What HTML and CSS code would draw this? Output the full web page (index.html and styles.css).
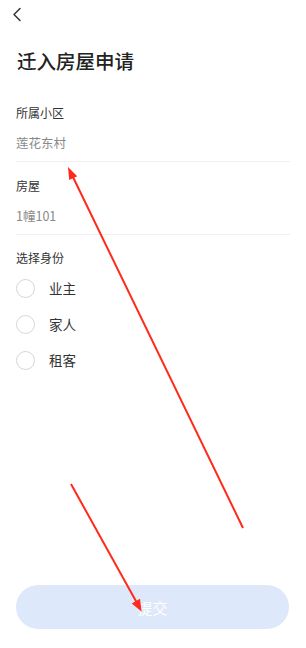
FILE: index.html
```html
<!DOCTYPE html>
<html lang="zh-CN">
<head>
<meta charset="utf-8">
<title>迁入房屋申请</title>
<link rel="stylesheet" href="styles.css">
</head>
<body>
<div class="page">
  <div class="nav">
    <svg class="back" width="12" height="16" viewBox="0 0 12 16"><path d="M9 1.5 L3 7.5 L9 13.5" fill="none" stroke="#333" stroke-width="1.5" stroke-linecap="round" stroke-linejoin="round"/></svg>
  </div>
  <h1 class="title">迁入房屋申请</h1>
  <div class="form">
    <div class="field">
      <div class="label">所属小区</div>
      <div class="value">莲花东村</div>
    </div>
    <div class="field">
      <div class="label">房屋</div>
      <div class="value">1幢101</div>
    </div>
    <div class="group">
      <div class="label">选择身份</div>
      <div class="radios">
        <div class="radio"><span class="circle"></span><span class="rtext">业主</span></div>
        <div class="radio"><span class="circle"></span><span class="rtext">家人</span></div>
        <div class="radio"><span class="circle"></span><span class="rtext">租客</span></div>
      </div>
    </div>
  </div>
  <div class="submit">提交</div>
  <svg class="marks" width="306" height="648" viewBox="0 0 306 648">
    <line x1="243" y1="528" x2="72" y2="175" stroke="#ff2a1a" stroke-width="2"/>
    <polygon points="68,167 69.2,180 77.2,176.2" fill="#ff2a1a"/>
    <line x1="71" y1="484" x2="137" y2="603" stroke="#ff2a1a" stroke-width="2"/>
    <polygon points="141.7,611.7 140,598.8 131.8,603.4" fill="#ff2a1a"/>
  </svg>
</div>
</body>
</html>
```
FILE: styles.css
```css
html, body {
  margin: 0;
  padding: 0;
  background: #fff;
}
body {
  font-family: "Noto Sans CJK SC", "Noto Sans", sans-serif;
  color: #333;
}
.page {
  position: relative;
  width: 306px;
  height: 648px;
  display: flex;
  flex-direction: column;
  overflow: hidden;
}
.nav {
  height: 30px;
  display: flex;
  align-items: center;
  padding-left: 11px;
}
.back {
  display: block;
}
.title {
  margin: 17px 0 0 17px;
  font-size: 19.5px;
  line-height: 28px;
  font-weight: 500;
  color: #222;
}
.form {
  padding: 0 16px;
  margin-top: 14px;
}
.field {
  padding: 14px 0 8px;
  border-bottom: 1px solid #f0f0f0;
  display: flex;
  flex-direction: column;
  gap: 10px;
}
.label {
  font-size: 12px;
  line-height: 20px;
  color: #333;
}
.value {
  font-size: 12.5px;
  line-height: 20px;
  color: #8a8a8a;
}
.group {
  padding-top: 13px;
}
.radios {
  display: flex;
  flex-direction: column;
  gap: 16px;
  margin-top: 10px;
}
.radio {
  display: flex;
  align-items: center;
  height: 20px;
}
.circle {
  width: 17px;
  height: 17px;
  border: 1px solid #d3d7db;
  border-radius: 50%;
  box-sizing: content-box;
}
.rtext {
  margin-left: 14px;
  font-size: 13.5px;
  line-height: 20px;
  color: #333;
}
.submit {
  margin: auto 17px 19px 16px;
  height: 44px;
  border-radius: 22px;
  background: #dee8fb;
  color: #fff;
  font-size: 15px;
  display: flex;
  align-items: center;
  justify-content: center;
}
.marks {
  position: absolute;
  top: 0;
  left: 0;
  pointer-events: none;
}
```
